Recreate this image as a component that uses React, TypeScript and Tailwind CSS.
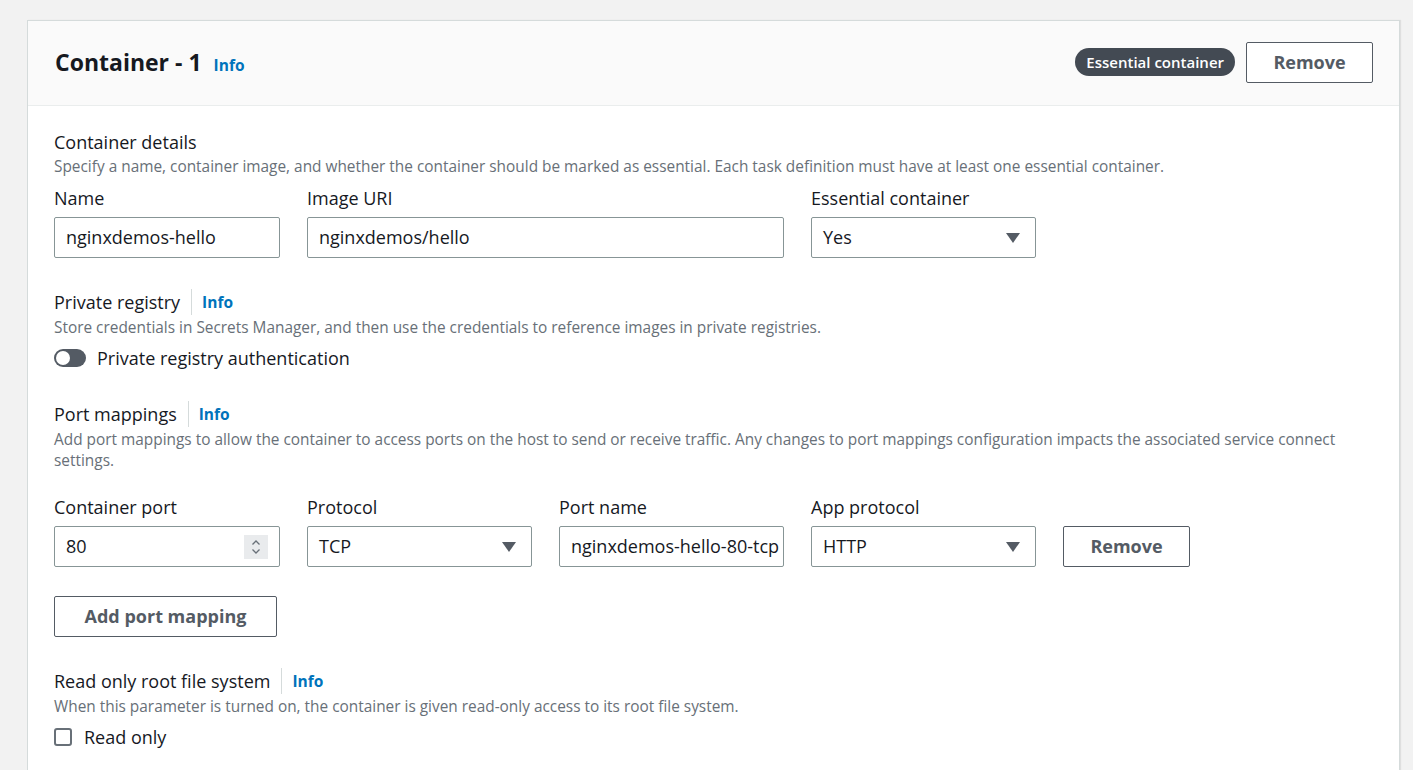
import React from 'react';

const font = { fontFamily: '"Open Sans", "Liberation Sans", sans-serif' };

const Info = () => <span className="text-[15.5px] font-bold text-[#0073bb] leading-[22px]">Info</span>;

const FieldLabel = ({ children }: { children: React.ReactNode }) => (
  <div className="text-[18px] leading-[22px] text-[#16191f] mb-[8px]">{children}</div>
);

const TextBox = ({ value, width }: { value: string; width: string }) => (
  <div
    className={`${width} h-[41px] border border-[#879596] rounded-[2px] bg-white px-[11px] flex items-center text-[18px] text-[#16191f] overflow-hidden whitespace-nowrap`}
  >
    {value}
  </div>
);

const Caret = () => (
  <svg width="14" height="10" viewBox="0 0 14 10">
    <path d="M0 0h14L7 10z" fill="#545b64" />
  </svg>
);

const SelectBox = ({ value }: { value: string }) => (
  <div className="w-[225px] h-[41px] border border-[#879596] rounded-[2px] bg-white pl-[11px] pr-[15px] flex items-center justify-between text-[18px] text-[#16191f]">
    <span>{value}</span>
    <Caret />
  </div>
);

const SectionTitle = ({ title }: { title: string }) => (
  <div className="flex items-center text-[18px] leading-[22px] text-[#16191f]">
    <span>{title}</span>
    <span className="ml-[11px] pl-[10px] border-l border-[#d5dbdb] h-[26px] flex items-center">
      <Info />
    </span>
  </div>
);

const Desc = ({ children, className = '' }: { children: React.ReactNode; className?: string }) => (
  <p className={`text-[15.4px] leading-[21px] text-[#687078] ${className}`}>{children}</p>
);

const OutlineButton = ({ label, width }: { label: string; width: string }) => (
  <button className={`${width} h-[41px] border border-[#545b64] rounded-[2px] bg-white text-[18px] font-bold text-[#545b64]`}>
    {label}
  </button>
);

export default function App() {
  return (
    <div className="min-h-screen bg-[#f2f2f2] pt-[20px] pl-[27px]" style={font}>
      <div className="w-[1373px] min-h-[750px] bg-white border-l border-t border-r border-[#d5dbdb] shadow-[1px_0_1px_rgba(0,0,0,0.08)]">
        {/* header */}
        <div className="h-[85px] bg-[#fafafa] border-b border-[#eaeded] pl-[27px] pr-[26px] pb-[2px] flex items-center justify-between">
          <div className="flex items-baseline">
            <h2 className="text-[23px] font-bold text-[#16191f]">Container - 1</h2>
            <span className="ml-[12px]">
              <Info />
            </span>
          </div>
          <div className="flex items-center gap-[11px]">
            <span className="h-[28px] px-[11px] rounded-full bg-[#434a53] text-white text-[15px] font-semibold flex items-center">
              Essential container
            </span>
            <OutlineButton label="Remove" width="w-[127px]" />
          </div>
        </div>

        {/* body */}
        <div className="pl-[26px] pt-[25px] pb-6">
          <div className="text-[18px] leading-[22px] text-[#16191f]">Container details</div>
          <Desc className="mt-[3px]">
            Specify a name, container image, and whether the container should be marked as essential. Each task definition must have at least one essential container.
          </Desc>

          <div className="mt-[10px] flex gap-[27px]">
            <div>
              <FieldLabel>Name</FieldLabel>
              <TextBox value="nginxdemos-hello" width="w-[226px]" />
            </div>
            <div>
              <FieldLabel>Image URI</FieldLabel>
              <TextBox value="nginxdemos/hello" width="w-[477px]" />
            </div>
            <div>
              <FieldLabel>Essential container</FieldLabel>
              <SelectBox value="Yes" />
            </div>
          </div>

          <div className="mt-[31px]">
            <SectionTitle title="Private registry" />
          </div>
          <Desc className="mt-[2px]">
            Store credentials in Secrets Manager, and then use the credentials to reference images in private registries.
          </Desc>
          <div className="mt-[8px] flex items-center gap-[11px] h-[24px]">
            <span className="w-[32px] h-[18px] rounded-full bg-[#545b64] flex items-center pl-[2px]">
              <span className="w-[14px] h-[14px] rounded-full bg-white" />
            </span>
            <span className="text-[18px] text-[#16191f]">Private registry authentication</span>
          </div>

          <div className="mt-[31px]">
            <SectionTitle title="Port mappings" />
          </div>
          <Desc className="mt-[2px] pr-[30px]">
            Add port mappings to allow the container to access ports on the host to send or receive traffic. Any changes to port mappings configuration impacts the associated service connect settings.
          </Desc>

          <div className="mt-[25px] flex items-end gap-[27px]">
            <div>
              <FieldLabel>Container port</FieldLabel>
              <div className="w-[226px] h-[41px] border border-[#879596] rounded-[2px] bg-white pl-[11px] pr-[11px] flex items-center justify-between text-[18px] text-[#16191f]">
                <span>80</span>
                <span className="w-[24px] h-[24px] bg-[#e9ebed] flex items-center justify-center">
                  <svg width="10" height="16" viewBox="0 0 10 16" fill="none" stroke="#687078" strokeWidth="1.3">
                    <path d="M1.5 5.5 5 2l3.5 3.5M1.5 10.5 5 14l3.5-3.5" />
                  </svg>
                </span>
              </div>
            </div>
            <div>
              <FieldLabel>Protocol</FieldLabel>
              <SelectBox value="TCP" />
            </div>
            <div>
              <FieldLabel>Port name</FieldLabel>
              <TextBox value="nginxdemos-hello-80-tcp" width="w-[225px] pr-[10px]" />
            </div>
            <div>
              <FieldLabel>App protocol</FieldLabel>
              <SelectBox value="HTTP" />
            </div>
            <OutlineButton label="Remove" width="w-[127px]" />
          </div>

          <div className="mt-[29px]">
            <OutlineButton label="Add port mapping" width="w-[223px]" />
          </div>

          <div className="mt-[31px]">
            <SectionTitle title="Read only root file system" />
          </div>
          <Desc className="mt-[2px]">
            When this parameter is turned on, the container is given read-only access to its root file system.
          </Desc>
          <div className="mt-[8px] flex items-center gap-[12px] h-[24px]">
            <span className="w-[18px] h-[18px] border-2 border-[#687078] rounded-[3px] bg-white" />
            <span className="text-[18px] text-[#16191f]">Read only</span>
          </div>
        </div>
      </div>
    </div>
  );
}
